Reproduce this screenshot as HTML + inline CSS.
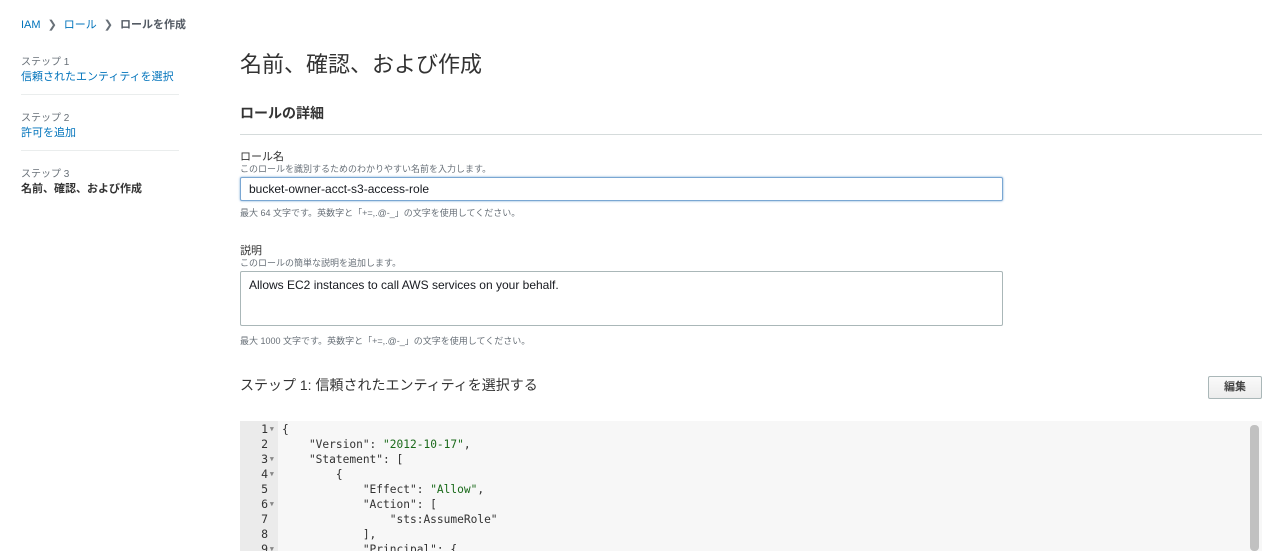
<!DOCTYPE html>
<html><head><meta charset="utf-8"><style>
*{box-sizing:border-box;margin:0;padding:0}
body{width:1280px;height:551px;overflow:hidden;background:#fff;font-family:"Liberation Sans","Noto Sans CJK JP",sans-serif;color:#16191f;position:relative}
.a{position:absolute;white-space:nowrap}
.link{color:#0073bb}
.sm{font-size:10px;color:#687078}
.hint{font-size:9px;color:#687078}
.box{position:absolute;border:1px solid #aab7b8;border-radius:2px;background:#fff;font-size:12px;padding-left:8px}
.code{position:absolute;left:240px;top:421px;width:1022px;height:130px;background:#f7f7f7;overflow:hidden}
.gut{position:absolute;left:0;top:0;width:38px;height:130px;background:#ebebeb}
.ln{position:absolute;font-family:"DejaVu Sans Mono","Liberation Mono",monospace;font-size:11.2px;line-height:15px;white-space:pre}
.g{position:absolute;left:0;width:38px;height:15px;line-height:15px;font-family:"DejaVu Sans Mono",monospace;font-size:11.5px;color:#333}
.g i{position:absolute;right:10px;font-style:normal}
.g b{position:absolute;right:4px;top:0;font-weight:normal;font-size:7px;color:#888}
.s{color:#1a6a1a}
</style></head><body>
<div class="a" style="left:21px;top:16px;font-size:11px"><span class="link">IAM</span><span style="color:#687078;margin:0 7px">&#x276F;</span><span class="link">ロール</span><span style="color:#687078;margin:0 7px">&#x276F;</span><b style="color:#545b64">ロールを作成</b></div>

<div class="a sm" style="left:21px;top:53px">ステップ 1</div>
<div class="a link" style="left:21px;top:68px;font-size:11px">信頼されたエンティティを選択</div>
<div class="a" style="left:21px;top:94px;width:158px;height:1px;background:#eaeded"></div>
<div class="a sm" style="left:21px;top:109px">ステップ 2</div>
<div class="a link" style="left:21px;top:124px;font-size:11px">許可を追加</div>
<div class="a" style="left:21px;top:150px;width:158px;height:1px;background:#eaeded"></div>
<div class="a sm" style="left:21px;top:165px">ステップ 3</div>
<div class="a" style="left:21px;top:180px;font-size:11px;font-weight:bold;color:#333">名前、確認、および作成</div>

<div class="a" style="left:240px;top:47px;font-size:22px;color:#333">名前、確認、および作成</div>
<div class="a" style="left:240px;top:103px;font-size:14px;font-weight:bold;color:#333">ロールの詳細</div>
<div class="a" style="left:240px;top:134px;width:1022px;height:1px;background:#d5dbdb"></div>

<div class="a" style="left:240px;top:148px;font-size:11px;color:#333">ロール名</div>
<div class="a hint" style="left:240px;top:162px">このロールを識別するためのわかりやすい名前を入力します。</div>
<div class="box" style="left:240px;top:177px;width:763px;height:24px;line-height:22px;border-color:#7aa7d3;box-shadow:0 0 2px #7aa7d3">bucket-owner-acct-s3-access-role</div>
<div class="a hint" style="left:240px;top:206px">最大 64 文字です。英数字と「+=,.@-_」の文字を使用してください。</div>

<div class="a" style="left:240px;top:242px;font-size:11px;color:#333">説明</div>
<div class="a hint" style="left:240px;top:256px">このロールの簡単な説明を追加します。</div>
<div class="box" style="left:240px;top:271px;width:763px;height:55px;padding-top:6px">Allows EC2 instances to call AWS services on your behalf.</div>
<div class="a hint" style="left:240px;top:334px">最大 1000 文字です。英数字と「+=,.@-_」の文字を使用してください。</div>

<div class="a" style="left:240px;top:375px;font-size:14px;color:#333">ステップ 1: 信頼されたエンティティを選択する</div>
<div class="a" style="left:1208px;top:376px;width:54px;height:23px;border:1px solid #aab7b8;border-radius:2px;background:linear-gradient(#fafafa,#ececec);font-size:11px;font-weight:bold;text-align:center;line-height:21px;color:#444">編集</div>

<div class="code">
<div class="gut"></div>
<div class="a" style="left:1010px;top:4px;width:9px;height:126px;background:#c1c1c1;border-radius:4px"></div>
<div class="g" style="top:1px"><i>1</i><b>▼</b></div>
<div class="g" style="top:16px"><i>2</i></div>
<div class="g" style="top:31px"><i>3</i><b>▼</b></div>
<div class="g" style="top:46px"><i>4</i><b>▼</b></div>
<div class="g" style="top:61px"><i>5</i></div>
<div class="g" style="top:76px"><i>6</i><b>▼</b></div>
<div class="g" style="top:91px"><i>7</i></div>
<div class="g" style="top:106px"><i>8</i></div>
<div class="g" style="top:121px"><i>9</i><b>▼</b></div>
<div class="ln" style="left:42px;top:1px;color:#333">{
    "Version": <span class="s">"2012-10-17"</span>,
    "Statement": [
        {
            "Effect": <span class="s">"Allow"</span>,
            "Action": [
                "sts:AssumeRole"
            ],
            "Principal": {</div>
</div>
</body></html>
